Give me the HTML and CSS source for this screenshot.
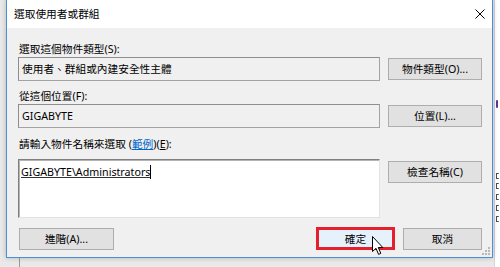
FILE: index.html
```html
<!DOCTYPE html>
<html lang="zh-Hant">
<head>
<meta charset="utf-8">
<title>選取使用者或群組</title>
<link rel="stylesheet" href="styles.css">
</head>
<body>
<div class="desktop">
  <div class="behind-right">
    <i class="bit b1"></i>
    <i class="bit b2"></i>
    <i class="bit b3"></i>
    <i class="bit b4"></i>
    <i class="bit b5"></i>
    <i class="bit b6"></i>
  </div>
  <div class="behind-line"></div>

  <div class="window">
    <div class="titlebar">
      <span class="title">選取使用者或群組</span>
      <svg class="close" width="10" height="10" viewBox="0 0 10 10"><path d="M0.5 0.5 L9.5 9.5 M9.5 0.5 L0.5 9.5" stroke="#000" stroke-width="1" fill="none"/></svg>
    </div>
    <div class="content">
      <div class="label">選取這個物件類型(S):</div>
      <div class="row">
        <div class="field">使用者、群組或內建安全性主體</div>
        <div class="btn">物件類型(O)...</div>
      </div>

      <div class="label gap7">從這個位置(F):</div>
      <div class="row">
        <div class="field">GIGABYTE</div>
        <div class="btn">位置(L)...</div>
      </div>

      <div class="label gap8">請輸入物件名稱來選取 (<span class="link">範例</span>)(<u>E</u>):</div>
      <div class="row top">
        <div class="textarea"><span class="resolved">GIGABYTE\Administrators</span><span class="caret"></span></div>
        <div class="btn offset">檢查名稱(C)</div>
      </div>

      <div class="footer">
        <div class="btn wide">進階(A)...</div>
        <div class="spacer"></div>
        <div class="btn small ok">確定</div>
        <div class="btn small">取消</div>
      </div>
    </div>
    <div class="grip">
      <i class="d1"></i><i class="d2"></i><i class="d3"></i><i class="d4"></i><i class="d5"></i><i class="d6"></i>
    </div>
  </div>

  <svg class="cursor" width="13" height="20" viewBox="0 0 13 20">
    <path d="M0.5 0.5 L0.5 15.5 L4 12.3 L6.6 18.4 L8.8 17.4 L6.3 11.5 L10.8 11.5 Z" fill="#fff" stroke="#000" stroke-width="1" stroke-linejoin="miter"/>
  </svg>
</div>
</body>
</html>
```

FILE: styles.css
```css
html, body {
  margin: 0;
  padding: 0;
}
body {
  width: 500px;
  height: 267px;
  overflow: hidden;
  background: #e9e9e9;
  font-family: "Noto Sans", "Noto Sans CJK TC", sans-serif;
  font-size: 10.7px;
  color: #000;
}
.desktop {
  position: relative;
  width: 500px;
  height: 267px;
  overflow: hidden;
}
.behind-right {
  position: absolute;
  left: 494px;
  top: 0;
  width: 6px;
  height: 267px;
  background: #fff;
  border-left: 1px solid #d4d4d4;
}
.bit {
  position: absolute;
  left: 1px;
  width: 2px;
  height: 4px;
  border: 1px solid #4a4a4a;
  border-right: none;
  border-radius: 1px;
}
.bit::after {
  content: "";
  position: absolute;
  left: 3px;
  top: 4px;
  width: 3px;
  height: 1px;
  background: #333;
}
.b1 {
  top: 100px;
  width: 2px;
  height: 8px;
  border: none;
  background: #5a3a8a;
}
.b1::after { display: none; }
.b2 { top: 173px; }
.b3 { top: 183px; }
.b4 { top: 194px; }
.b5 { top: 205px; }
.b6 { top: 216px; }
.behind-line {
  position: absolute;
  left: 19px;
  top: 257px;
  width: 1px;
  height: 10px;
  background: #9a9a9a;
}

.window {
  position: absolute;
  left: 6px;
  top: -1px;
  width: 485px;
  height: 257px;
  border: 1px solid #4a90d9;
  background: #f0f0f0;
  box-shadow: 0 0 5px rgba(0, 0, 0, 0.22);
  display: flex;
  flex-direction: column;
}
.titlebar {
  height: 28px;
  background: #fff;
  display: flex;
  align-items: center;
  justify-content: space-between;
  padding: 0 7px 0 7px;
  flex: none;
}
.title {
  line-height: 16px;
}
.close {
  display: block;
}
.content {
  flex: 1;
  display: flex;
  flex-direction: column;
  padding: 13px 10px 6px 11px;
}
.label {
  height: 16px;
  line-height: 16px;
  padding-left: 1px;
  white-space: nowrap;
}
.gap7 { margin-top: 7px; }
.gap8 { margin-top: 8px; }
.link {
  color: #0066cc;
  text-decoration: underline;
}
.row {
  display: flex;
  align-items: center;
  gap: 8px;
}
.row.top {
  align-items: flex-start;
  margin-top: 7px;
}
.field {
  flex: 1;
  height: 24px;
  box-sizing: border-box;
  border: 1px solid #a3a3a3;
  border-top-color: #8e8e8e;
  border-left-color: #8e8e8e;
  padding-left: 3px;
  line-height: 22px;
  white-space: nowrap;
}
.btn {
  flex: none;
  width: 94px;
  height: 22px;
  box-sizing: border-box;
  border: 1px solid #adadad;
  background: #e1e1e1;
  text-align: center;
  line-height: 20px;
  white-space: nowrap;
}
.btn.offset {
  margin-top: 2px;
}
.textarea {
  flex: 1;
  height: 59px;
  box-sizing: border-box;
  background: #fff;
  border: 1px solid #e3e3e3;
  border-top-color: #7f7f7f;
  border-left-color: #7f7f7f;
  box-shadow: inset 1px 1px 0 #b4b4b4;
  padding: 4px 0 0 2px;
  line-height: 16px;
  white-space: nowrap;
}
.resolved {
  text-decoration: underline;
  text-decoration-color: #333;
}
.caret {
  display: inline-block;
  width: 1px;
  height: 14px;
  background: #000;
  vertical-align: -3px;
}
.footer {
  display: flex;
  align-items: center;
  gap: 8px;
  margin-top: 10px;
}
.spacer {
  flex: 1;
}
.btn.wide {
  width: 95px;
  margin-left: 1px;
}
.btn.small {
  width: 79px;
}
.btn.ok {
  position: relative;
  background: #e5f1fb;
  border-color: #0078d7;
}
.btn.ok::after {
  content: "";
  position: absolute;
  left: -1px;
  top: -2px;
  right: -1px;
  bottom: -1px;
  border: 3px solid #e4202c;
}
.grip {
  position: absolute;
  right: 2px;
  bottom: 2px;
  width: 8px;
  height: 8px;
}
.grip i {
  position: absolute;
  width: 2px;
  height: 2px;
  background: #b8b8b8;
}
.grip .d1 { left: 6px; top: 0; }
.grip .d2 { left: 3px; top: 3px; }
.grip .d3 { left: 6px; top: 3px; }
.grip .d4 { left: 0; top: 6px; }
.grip .d5 { left: 3px; top: 6px; }
.grip .d6 { left: 6px; top: 6px; }
.cursor {
  position: absolute;
  left: 372px;
  top: 236px;
}
```
